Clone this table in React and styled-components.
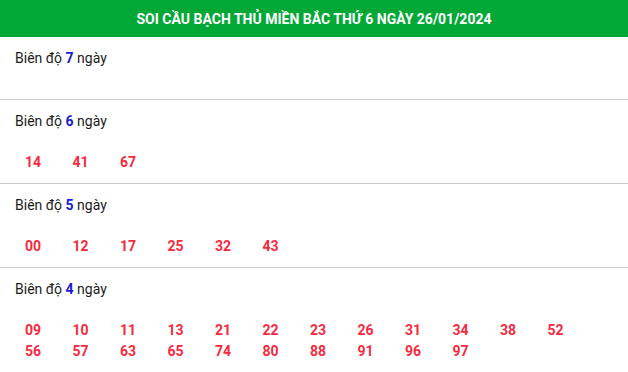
import styled, { createGlobalStyle } from "styled-components";

/* Data ---------------------------*/
const groups = [
    { days: 7, numbers: [] },
    { days: 6, numbers: ["14", "41", "67"] },
    { days: 5, numbers: ["00", "12", "17", "25", "32", "43"] },
    {
        days: 4,
        numbers: [
            "09", "10", "11", "13", "21", "22", "23", "26", "31", "34", "38", "52",
            "56", "57", "63", "65", "74", "80", "88", "91", "96", "97",
        ],
    },
];

const GlobalStyle = createGlobalStyle`
    html, body {
        margin: 0;
        padding: 0;
        background: #fff;
    }
    body {
        font-family: Roboto, "Liberation Sans", Arial, sans-serif;
    }
`;

const App = () => {
    return (
        <>
            <GlobalStyle />
            <BoxStyled>
                <Header>SOI CẦU BẠCH THỦ MIỀN BẮC THỨ 6 NGÀY 26/01/2024</Header>
                {groups.map((g) => (
                    <Group key={g.days}>
                        <Title>
                            Biên độ <Days>{g.days}</Days> ngày
                        </Title>
                        <NumberList>
                            {g.numbers.map((n, i) => (
                                <Num key={i}>{n}</Num>
                            ))}
                        </NumberList>
                    </Group>
                ))}
            </BoxStyled>
        </>
    );
};

export default App;

const BoxStyled = styled.div`
    width: 628px;
`;

const Header = styled.div`
    height: 37px;
    display: flex;
    align-items: center;
    justify-content: center;
    background: #02a836;
    color: #fff;
    font-size: 14px;
    font-weight: 700;
`;

const Group = styled.div`
    padding: 10px 15px;
    border-bottom: 1px solid #c8c8c8;

    &:last-child {
        border-bottom: none;
    }
`;

const Title = styled.div`
    line-height: 22px;
    font-size: 14px;
    color: #1c1c1c;
`;

const Days = styled.span`
    color: #1a1ad0;
    font-weight: 700;
`;

const NumberList = styled.div`
    margin-top: 20px;
    padding-left: 10px;
    display: grid;
    grid-template-columns: repeat(12, 47.5px);
`;

const Num = styled.span`
    line-height: 21px;
    font-size: 14px;
    font-weight: 700;
    color: #f52a3e;
`;
